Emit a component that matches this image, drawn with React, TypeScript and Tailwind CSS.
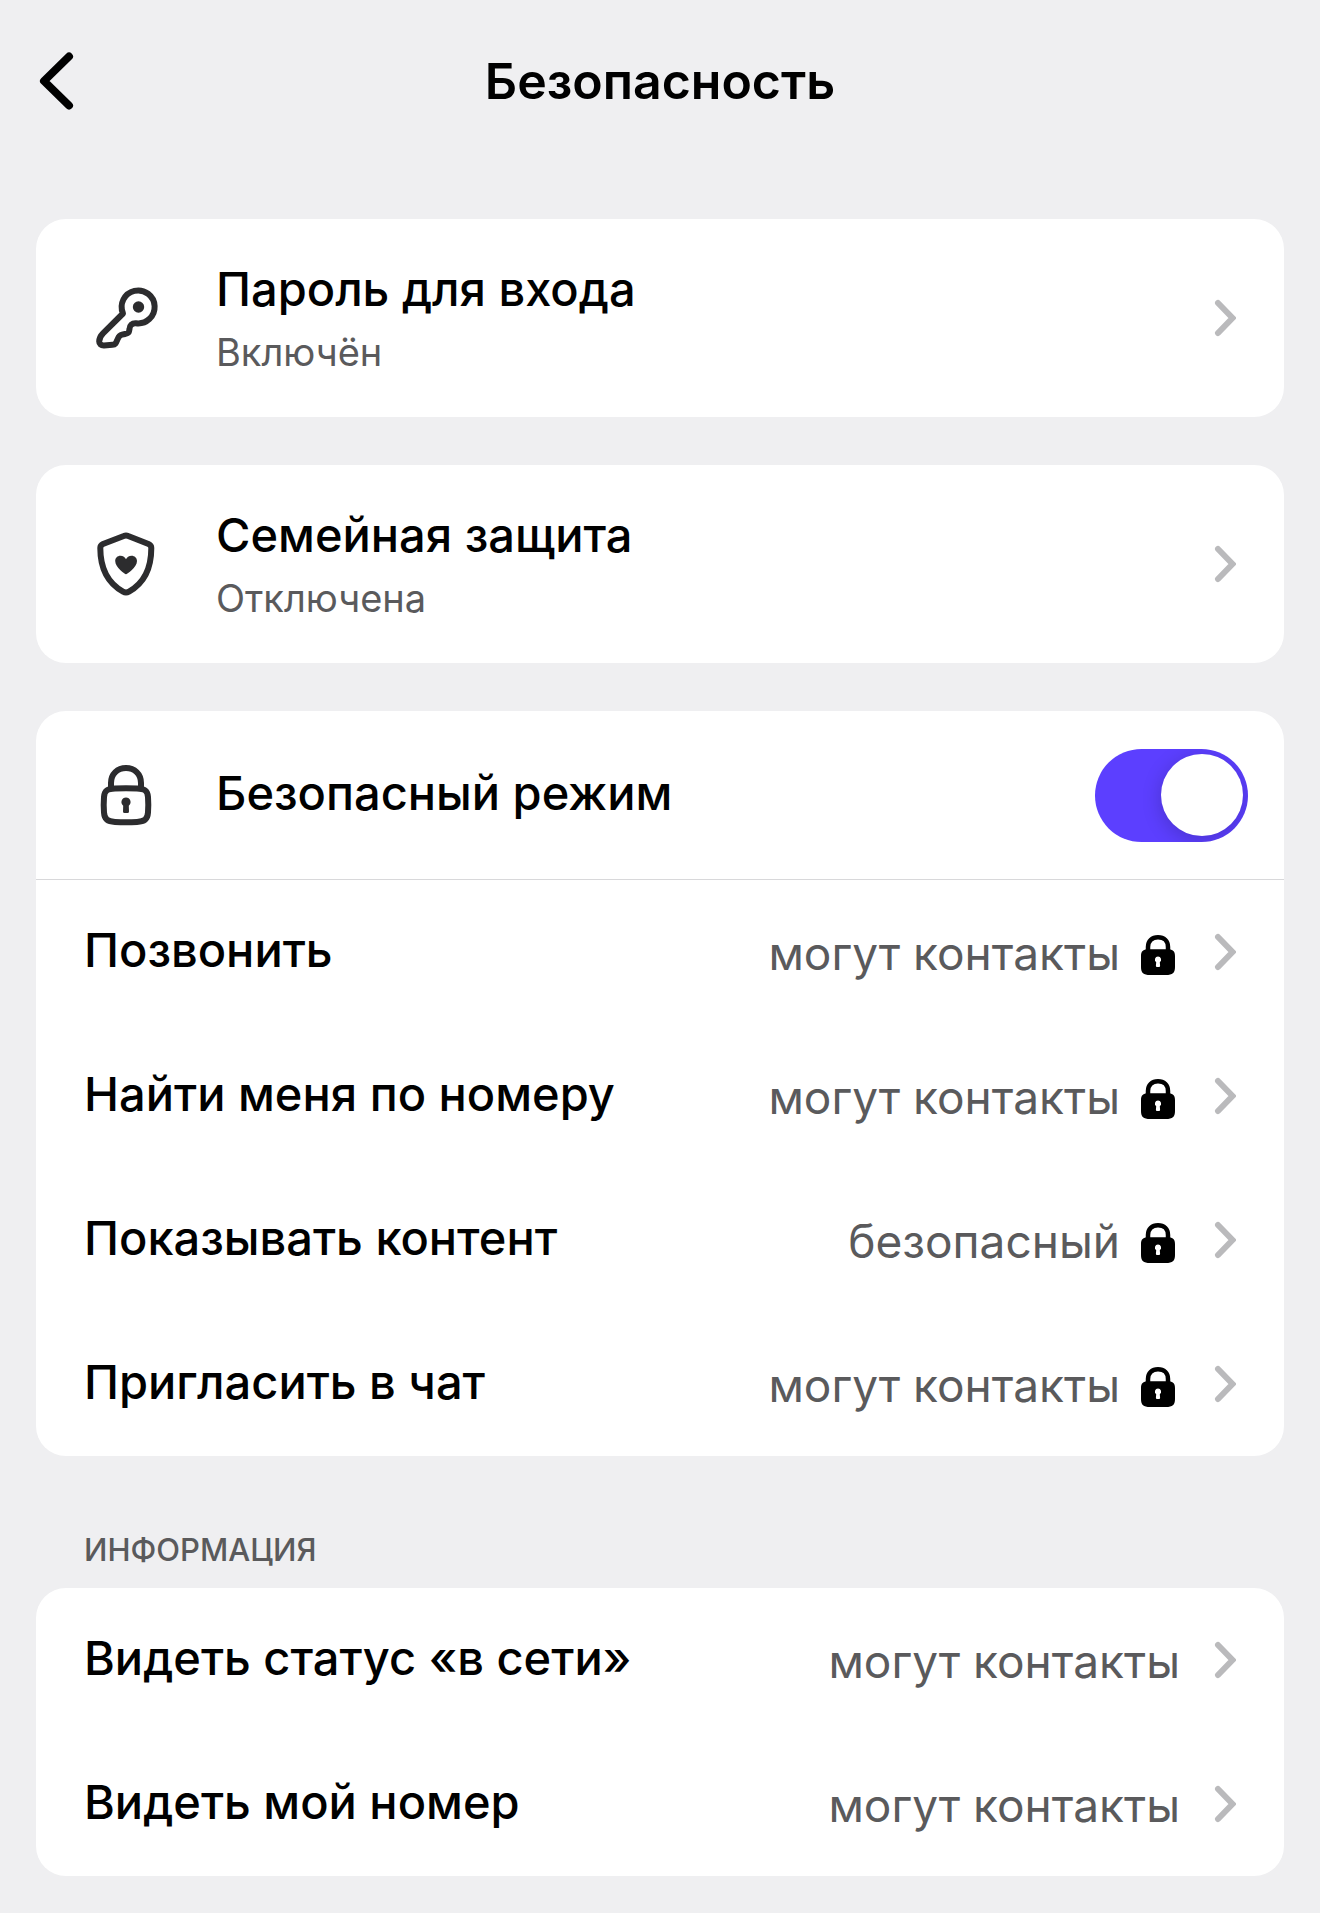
import React, { useState } from "react";

interface LinkCardProps {
  icon: React.ReactNode;
  title: string;
  status: string;
}

interface SettingRowProps {
  label: string;
  value: string;
  locked?: boolean;
}

const privacyRows: SettingRowProps[] = [
  { label: "Позвонить", value: "могут контакты", locked: true },
  { label: "Найти меня по номеру", value: "могут контакты", locked: true },
  { label: "Показывать контент", value: "безопасный", locked: true },
  { label: "Пригласить в чат", value: "могут контакты", locked: true }
];

const infoRows: SettingRowProps[] = [
  { label: "Видеть статус «в сети»", value: "могут контакты" },
  { label: "Видеть мой номер", value: "могут контакты" }
];

function BackIcon() {
  return (
    <svg className="h-15 w-10" viewBox="0 0 40 60" fill="none" stroke="currentColor" strokeWidth="8" strokeLinecap="round" strokeLinejoin="round">
      <path d="M33 5.500 L8 30 L33 54.500" />
    </svg>
  );
}

function ChevronIcon() {
  return (
    <svg className="h-10 w-6 shrink-0 text-[#bababc]" viewBox="0 0 24 40" fill="none" stroke="currentColor" strokeWidth="6" strokeLinecap="round" strokeLinejoin="miter">
      <path d="M6 5 L20.500 20 L6 35" />
    </svg>
  );
}

function KeyIcon() {
  return (
    <svg className="size-18 shrink-0" viewBox="0 0 72 72" fill="none" stroke="currentColor" strokeWidth="6" strokeLinejoin="round">
      <path d="M33 31.500 A16.500 16.500 0 1 1 46 41.300 C42 41 39.500 43.500 39.500 47 L39 49.500 C38.600 51.500 37 51.600 35 52 L32 52.700 C29.500 53.300 28.700 54.500 27.700 57 C26 61 25.500 62.600 22.500 62.800 L14 63.400 C11 63.500 9.200 62 9.200 59.500 C9.200 56 10.500 53.800 13 51.300 Z" />
      <circle cx="48.500" cy="25" r="5.700" fill="currentColor" stroke="none" />
    </svg>
  );
}

function ShieldHeartIcon() {
  return (
    <svg className="size-18 shrink-0" viewBox="0 0 72 72" fill="none" stroke="currentColor" strokeWidth="6" strokeLinejoin="round">
      <path d="M33.800 8 Q36 7 38.200 8 L58.500 16 Q61.300 17.200 61.300 20 C61.300 42 53.500 55.500 39 63.600 Q36 65.200 33 63.600 C18.500 55.500 10.300 42 10.300 20 Q10.300 17.200 13 16 Z" />
      <path fill="currentColor" stroke="none" d="M36 46.200 C35 46.200 25.200 39.500 25.200 33 C25.200 29.800 27.500 27.700 30.400 27.700 C33 27.700 35.300 29.300 36 31.200 C36.700 29.300 39 27.700 41.600 27.700 C44.500 27.700 47 29.800 47 33 C47 39.500 37 46.200 36 46.200 Z" />
    </svg>
  );
}

function LockIcon() {
  return (
    <svg className="size-18 shrink-0" viewBox="0 0 72 72" fill="none" stroke="currentColor" strokeWidth="6">
      <path d="M21 31 V24 C21 15 27.500 9 36 9 C44.500 9 51 15 51 24 V31" />
      <path d="M25 29.500 Q36 29 47 29.500 C54.500 29.800 57.500 31.500 58 38 Q58.600 46 58 53.500 C57.500 60.500 54.500 62.500 47 62.900 Q36 63.500 25 62.900 C17.500 62.500 14.500 60.500 14 53.500 Q13.400 46 14 38 C14.500 31.500 17.500 29.800 25 29.500 Z" />
      <path fill="currentColor" stroke="none" d="M36 38.500 A4.600 4.600 0 0 0 33.200 46.700 L33 52.500 Q33 54 34.500 54 H37.500 Q39 54 39 52.500 L38.800 46.700 A4.600 4.600 0 0 0 36 38.500 Z" />
    </svg>
  );
}

function SmallLockIcon() {
  return (
    <svg className="mr-1 h-10 w-9 shrink-0 text-black" viewBox="0 0 36 40" fill="currentColor">
      <path d="M8 17 V12 C8 6 12 2.300 18 2.300 C24 2.300 28 6 28 12 V17" fill="none" stroke="currentColor" strokeWidth="4.500" />
      <path fillRule="evenodd" d="M8 14.300 H28 C33 14.300 35 16.500 35 21 V32 C35 38 32.500 40 26 40 H10 C3.500 40 1 38 1 32 V21 C1 16.500 3 14.300 8 14.300 Z M18 21.500 A3.200 3.200 0 0 0 16.200 27.300 L15.900 31 Q15.900 32 17 32 H19 Q20.100 32 20.100 31 L19.800 27.300 A3.200 3.200 0 0 0 18 21.500 Z" />
    </svg>
  );
}

function LinkCard({ icon, title, status }: LinkCardProps) {
  return (
    <button className="flex w-full items-center rounded-[30px] bg-white py-[33px] pr-12 pl-[54px] text-left">
      <span className="text-[#2c2c2e]">{icon}</span>
      <span className="ml-[54px] flex min-w-0 flex-1 flex-col pt-1.5">
        <span className="text-[47px] leading-[62px] font-medium">{title}</span>
        <span className="text-[38px] leading-[64px] text-[#5a5a5c]">{status}</span>
      </span>
      <ChevronIcon />
    </button>
  );
}

function SettingRow({ label, value, locked }: SettingRowProps) {
  return (
    <button className="flex h-36 w-full items-center px-12 text-left">
      <span className="flex-1 pb-1 text-[47px] leading-[60px] font-medium">{label}</span>
      <span className="mr-8 flex items-center gap-5 pt-1.5 text-[46px] leading-[60px] text-[#5a5a5c]">
        <span className="pb-1">{value}</span>
        {locked && <SmallLockIcon />}
      </span>
      <ChevronIcon />
    </button>
  );
}

export default function App() {
  const [safeMode, setSafeMode] = useState(true);

  return (
    <div className="min-h-screen bg-[#efeff1] px-9 pb-9 font-['Inter','Noto_Sans',sans-serif] text-black">
      {/* Header */}
      <header className="grid h-[162px] grid-cols-[40px_1fr_40px] items-center">
        <button aria-label="Назад">
          <BackIcon />
        </button>
        <h1 className="text-center text-[50px] leading-[60px] font-semibold">Безопасность</h1>
      </header>

      <main className="flex flex-col gap-12 pt-[57px]">
        <LinkCard icon={<KeyIcon />} title="Пароль для входа" status="Включён" />
        <LinkCard icon={<ShieldHeartIcon />} title="Семейная защита" status="Отключена" />

        {/* Safe mode and the settings it locks */}
        <section className="rounded-[30px] bg-white">
          <label className="flex h-[169px] items-center border-b border-[#d8d8da] pr-9 pl-[54px]">
            <span className="text-[#2c2c2e]">
              <LockIcon />
            </span>
            <span className="ml-[54px] flex-1 pb-1 text-[47px] leading-[60px] font-medium">Безопасный режим</span>
            <input
              type="checkbox"
              role="switch"
              checked={safeMode}
              onChange={(e) => setSafeMode(e.target.checked)}
              className="flex h-[93px] w-[153px] shrink-0 appearance-none items-center overflow-hidden rounded-full bg-[#d5d5d8] p-[5px] before:size-[82px] before:rounded-full before:bg-white before:shadow-[0_4px_20px_rgba(0,0,0,0.2)] checked:justify-end checked:bg-[#5c3fff]"
            />
          </label>
          {privacyRows.map((row) => (
            <SettingRow key={row.label} {...row} />
          ))}
        </section>

        <section className="pt-[26px]">
          <h2 className="pb-[18px] pl-12 text-[31px] leading-10 font-medium text-[#5a5a5c]">ИНФОРМАЦИЯ</h2>
          <div className="rounded-[30px] bg-white">
            {infoRows.map((row) => (
              <SettingRow key={row.label} {...row} />
            ))}
          </div>
        </section>
      </main>
    </div>
  );
}
